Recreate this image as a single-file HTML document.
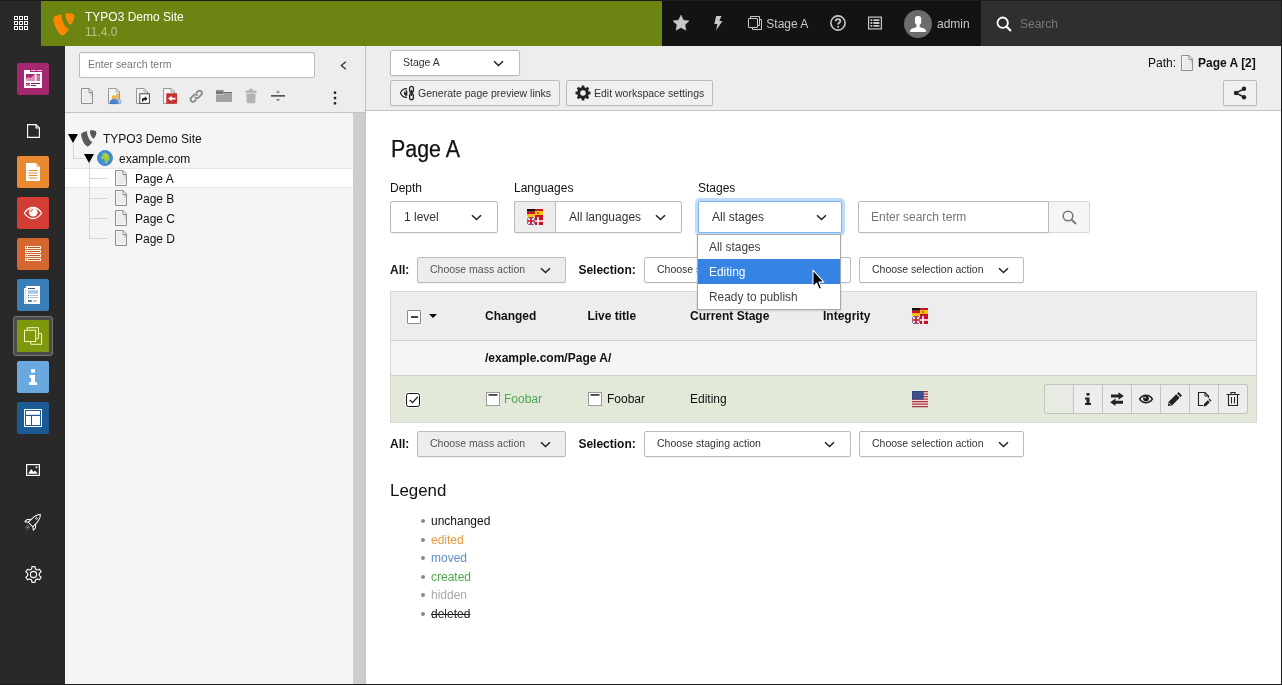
<!DOCTYPE html>
<html>
<head>
<meta charset="utf-8">
<title>TYPO3 Workspaces</title>
<style>
*{box-sizing:border-box;margin:0;padding:0}
html,body{width:1282px;height:685px;overflow:hidden;background:#fff}
body{font-family:"Liberation Sans",sans-serif;font-size:12px;color:#333;line-height:16px}
#app{will-change:transform;position:relative;width:1282px;height:685px;overflow:hidden;background:#fff}
.abs{position:absolute}
.t{position:absolute;white-space:nowrap;line-height:16px}
.b{font-weight:700}
svg{position:absolute;display:block;overflow:visible}
/* top bar */
#topbar{position:absolute;left:0;top:0;width:1282px;height:46px;background:#292929}
#tb-site{position:absolute;left:41px;top:1px;width:621px;height:45px;background:#6c8412}
#tb-tools{position:absolute;left:662px;top:0;width:319px;height:46px;background:#131313}
#tb-search{position:absolute;left:981px;top:0;width:301px;height:46px;background:#2f2f2f}
/* module menu */
#modmenu{position:absolute;left:0;top:46px;width:65px;height:639px;background:#292929}
.mod{position:absolute;left:17px;width:32px;height:32px;border-radius:2px}
/* tree */
#tree{position:absolute;left:65px;top:46px;width:300px;height:639px;background:#f5f5f5}
#tree-head{position:absolute;left:0;top:0;width:300px;height:67px;background:#ededed;border-bottom:1px solid #c3c3c3}
/* content */
#content{position:absolute;left:365px;top:46px;width:917px;height:639px;background:#fff;border-left:1px solid #c3c3c3}
#dochead{position:absolute;left:0;top:0;width:915px;height:65px;background:#ededed;border-bottom:1px solid #c3c3c3}
.sel{position:absolute;background:#fff;border:1px solid #bbb;border-radius:2px;box-shadow:0 1px 1px rgba(0,0,0,.06)}
.btn{position:absolute;background:#f0f0f0;border:1px solid #bbb;border-radius:2px;box-shadow:0 1px 1px rgba(0,0,0,.06)}
.sm{font-size:10.5px}
#legend i{position:absolute;left:54.700px;width:4px;height:4px;border-radius:2px;background:#8a8a8a}
.dd{font-size:11.9px}
</style>
</head>
<body>
<div id="app">

<!-- ================= TOP BAR ================= -->
<div id="topbar">
  <!-- grid icon -->
  <svg style="left:14px;top:16px" width="14" height="14" viewBox="0 0 14 14" fill="none" stroke="#fff" stroke-width="1" shape-rendering="crispEdges"><rect x="0.5" y="0.5" width="3" height="3"/><rect x="5.5" y="0.5" width="3" height="3"/><rect x="10.5" y="0.5" width="3" height="3"/><rect x="0.5" y="5.5" width="3" height="3"/><rect x="5.5" y="5.5" width="3" height="3"/><rect x="10.5" y="5.5" width="3" height="3"/><rect x="0.5" y="10.5" width="3" height="3"/><rect x="5.5" y="10.5" width="3" height="3"/><rect x="10.5" y="10.5" width="3" height="3"/></svg>
  <div id="tb-site">
    <!-- typo3 logo -->
    <svg style="left:8px;top:9px" width="29" height="29" viewBox="0 0 16 16" fill="#ff8700">
      <path d="M11.1 10.3c-.2 0-.3.1-.5.1-1.500 0-3.700-5.200-3.700-7 0-.6.200-.9.400-1-1.800.2-4 .9-4.700 1.700-.2.200-.2.600-.2 1 0 2.700 2.900 8.900 5 8.900.900 0 2.500-1.500 3.700-3.700M10.200 1.800c1.900 0 3.800.3 3.800 1.400 0 2.200-1.400 4.800-2.100 4.800-1.200 0-2.800-3.500-2.800-5.200 0-.8.300-1 1.100-1"/>
    </svg>
    <span class="t" style="left:44px;top:8px;color:#fff">TYPO3 Demo Site</span>
    <span class="t" style="left:44px;top:23px;color:rgba(255,255,255,.5)">11.4.0</span>
  </div>
  <div id="tb-tools">
    <!-- star -->
    <svg style="left:11px;top:15px" width="16" height="16" viewBox="0 0 16 16" fill="#c8c8c8">
      <path d="M8 .2l2.400 5 5.500.7-4 3.800 1 5.500L8 12.500l-4.900 2.700 1-5.500-4-3.800 5.500-.7z" stroke="#c8c8c8" stroke-width=".6" stroke-linejoin="round"/>
    </svg>
    <!-- bolt -->
    <svg style="left:48px;top:15px" width="16" height="16" viewBox="0 0 16 16" fill="#c8c8c8">
      <path d="M6.200 1h5.300L9.300 6h3.200L6 15.500 7.400 9H4.300z"/>
    </svg>
    <!-- workspace icon -->
    <svg style="left:85px;top:15px" width="16" height="16" viewBox="0 0 16 16" fill="none" stroke="#c8c8c8" stroke-width="1">
      <rect x="1.500" y="3.500" width="9" height="9" rx=".5"/><path d="M3.500 3.500V1.500h9v9h-2"/><path d="M12.500 4.500h2v10h-9v-2"/>
    </svg>
    <span class="t" style="left:104.300px;top:16px;color:#c8c8c8">Stage A</span>
    <!-- help -->
    <svg style="left:168px;top:15px" width="16" height="16" viewBox="0 0 16 16" fill="none" stroke="#c8c8c8">
      <circle cx="8" cy="8" r="7.100" stroke-width="1.600"/>
      <path d="M5.700 6.300c0-1.400 1-2.200 2.300-2.200s2.300.8 2.300 2.100c0 1.600-2.200 1.600-2.200 3.300" stroke-width="1.800"/><circle cx="8.100" cy="11.800" r="1.050" fill="#c8c8c8" stroke="none"/>
    </svg>
    <!-- list -->
    <svg style="left:206px;top:16px" width="14" height="14" viewBox="0 0 14 14" fill="none" stroke="#c8c8c8" stroke-width="1.200">
      <rect x=".6" y="1.100" width="12.800" height="11.800"/><path d="M2.500 4.200h1.800M5.400 4.200h6M2.500 7h1.800M5.400 7h6M2.500 9.800h1.800M5.400 9.800h6" stroke-width="1.800"/>
    </svg>
    <!-- avatar -->
    <div class="abs" style="left:242px;top:10px;width:28px;height:28px;border-radius:14px;background:#6c6c6c;overflow:hidden">
      <svg style="left:0;top:0" width="28" height="28" viewBox="0 0 28 28" fill="#fff">
        <rect x="11" y="6" width="6.200" height="8.500" rx="2.600"/><rect x="12.500" y="13" width="3.200" height="5"/><path d="M6 22c.2-2 .8-3 2.200-3.500L12.500 17l1.600 1.200 1.600-1.200 4.300 1.500c1.400.5 2 1.500 2.200 3.500z"/>
      </svg>
    </div>
    <span class="t" style="left:275px;top:16px;color:#c8c8c8">admin</span>
  </div>
  <div id="tb-search">
    <svg style="left:15px;top:16px" width="16" height="16" viewBox="0 0 16 16" fill="none" stroke="#fff" stroke-width="1.800">
      <circle cx="6.700" cy="6.700" r="5.200"/><path d="M10.600 10.600l4.400 4.400" stroke-width="2.200"/>
    </svg>
    <span class="t" style="left:39px;top:16px;color:#777">Search</span>
  </div>
</div>

<!-- ================= MODULE MENU ================= -->
<div id="modmenu">
  <!-- dashboard -->
  <div class="mod" style="top:17px;background:#a5276e">
    <svg style="left:0;top:0" width="32" height="32" viewBox="0 0 32 32">
      <path d="M7 7h6v2h12v16H7z" fill="#fff"/>
      <rect x="14" y="7" width="5" height="1" fill="#f3c6de"/><rect x="20" y="7" width="5" height="1" fill="#f3c6de"/>
      <rect x="9" y="11" width="9" height="7" fill="#a5276e"/><path d="M9 18v-2.500l2.500-1.500 2 1 4.500-4v7z" fill="#dc8fb9"/>
      <rect x="19.500" y="11" width="3.500" height="7" fill="#cf74a7"/><rect x="19.500" y="11" width="3.500" height="1" fill="#a5276e"/>
      <rect x="9" y="20" width="4" height="3" fill="#cf74a7"/><rect x="9" y="20" width="4" height="1" fill="#a5276e"/>
      <rect x="14" y="20" width="9" height="1" fill="#7d1d53"/><rect x="14" y="22" width="5" height="1" fill="#7d1d53"/>
    </svg>
  </div>
  <!-- web group icon -->
  <svg style="left:27px;top:78px" width="13" height="14" viewBox="0 0 13 14" fill="none" stroke="#fff" stroke-width="1.100">
    <path d="M.6 .6h8.400l3.400 3.400v9.400H.6z"/><path d="M9 .6V4h3.400"/>
  </svg>
  <!-- page -->
  <div class="mod" style="top:110px;background:#e98a30">
    <svg style="left:0;top:0" width="32" height="32" viewBox="0 0 32 32">
      <path d="M9 7h10l4 4v14H9z" fill="#fff"/><path d="M19 7l4 4h-4z" fill="#f6c99a"/>
      <path d="M11.500 14.500h9M11.500 17h9M11.500 19.500h9M11.500 22h9" stroke="#e98a30" stroke-width="1.100"/>
    </svg>
  </div>
  <!-- view -->
  <div class="mod" style="top:151px;background:#d23e35">
    <svg style="left:0;top:0" width="32" height="32" viewBox="0 0 32 32">
      <path d="M7.300 16C10 12 13 10.500 16 10.500S22 12 24.700 16C22 20 19 21.500 16 21.500S10 20 7.300 16z" fill="none" stroke="#fff" stroke-width="1.300"/>
      <circle cx="16.200" cy="15.300" r="4.300" fill="#fff"/><path d="M13.800 15a2.600 2.600 0 0 1 2.400-2.500" fill="none" stroke="#d23e35" stroke-width="1"/>
    </svg>
  </div>
  <!-- list -->
  <div class="mod" style="top:192px;background:#d4672f">
    <svg style="left:0;top:0" width="32" height="32" viewBox="0 0 32 32">
      <g fill="#fdf1df"><rect x="8" y="8" width="16" height="3"/><rect x="8" y="12" width="16" height="3"/><rect x="8" y="16" width="16" height="3"/><rect x="8" y="20" width="16" height="3"/></g>
      <path d="M11 9.500h12M11 13.500h12M11 17.500h12M11 21.500h12" stroke="#b3592b" stroke-width="1"/>
      <path d="M9 9.500h1M9 13.500h1M9 17.500h1M9 21.500h1" stroke="#b3592b" stroke-width="1"/>
    </svg>
  </div>
  <!-- forms -->
  <div class="mod" style="top:233px;background:#3a7fb8">
    <svg style="left:0;top:0" width="32" height="32" viewBox="0 0 32 32">
      <rect x="7" y="9" width="3" height="16" fill="#f2f6fb"/><rect x="9" y="7" width="14" height="18" fill="#fff"/><rect x="8.600" y="9" width=".6" height="16" fill="#bcd0e4"/>
      <rect x="11" y="9" width="7" height="1" fill="#46586b"/><rect x="11" y="11.200" width="10" height="3.500" fill="#a9c6e4"/>
      <rect x="11" y="16" width="1" height="1" fill="#46586b"/><rect x="13.200" y="16" width="7.800" height="1" fill="#b4c2d2"/>
      <rect x="11" y="18" width="1" height="1" fill="#46586b"/><rect x="13.200" y="18" width="7.800" height="1" fill="#b4c2d2"/>
      <rect x="11" y="21.200" width="3.800" height="1.700" fill="#2e6da4"/><rect x="16.200" y="21.200" width="3.700" height="1.700" fill="#b4c2d2"/>
    </svg>
  </div>
  <!-- workspaces (active) -->
  <div class="abs" style="left:13px;top:270px;width:40px;height:40px;border:1px solid #787878;background:#4c4c4c;border-radius:3px"></div>
  <div class="mod" style="top:274px;background:#7f990f;border-radius:1px">
    <svg style="left:0;top:0" width="32" height="32" viewBox="0 0 32 32" fill="none" stroke="#f3f8b4" stroke-width="1">
      <rect x="7.500" y="10.300" width="11.200" height="11.200"/><path d="M10.300 10.300V7.700h11.200v11h-2.600"/><path d="M21.600 13.500h3v10.800H13.700v-2.700"/>
    </svg>
  </div>
  <!-- info -->
  <div class="mod" style="top:315px;background:#6aa9e0">
    <svg style="left:0;top:0" width="32" height="32" viewBox="0 0 32 32" fill="#fff">
      <rect x="14" y="8.200" width="4" height="3.500"/><path d="M12.600 14H18v7.300h2V24h-8v-2.700h2V17h-1.400z"/>
    </svg>
  </div>
  <!-- template -->
  <div class="mod" style="top:356px;background:#1c5a96">
    <svg style="left:0;top:0" width="32" height="32" viewBox="0 0 32 32">
      <rect x="7.500" y="7.500" width="17" height="17" fill="none" stroke="#fff" stroke-width="1"/>
      <rect x="9" y="9" width="14" height="3.800" fill="#fff"/><rect x="9" y="14" width="5" height="9" fill="#fff"/><rect x="15" y="14" width="8" height="9" fill="#fff"/>
    </svg>
  </div>
  <!-- file group: image -->
  <svg style="left:26px;top:418px" width="14" height="12" viewBox="0 0 14 12">
    <rect x=".6" y=".6" width="12.800" height="10.800" fill="none" stroke="#fff" stroke-width="1.200"/><path d="M2.200 9.800l3-4.800 2.300 3 1.500-1.500 2.800 3.300z" fill="#fff"/><circle cx="10.500" cy="3.300" r="1" fill="#fff"/>
  </svg>
  <!-- rocket -->
  <svg style="left:25px;top:468px" width="16" height="16" viewBox="0 0 16 16" fill="none" stroke="#fff" stroke-width="1" stroke-linejoin="round">
    <g transform="rotate(45 8 8)"><path d="M8 -2.500C10.800 .5 11.200 4 11.200 7v4.500H4.800V7C4.800 4 5.200 .5 8 -2.500z"/><path d="M4.800 7.500L2 10.500v3l2.800-2M11.200 7.500l2.800 3v3l-2.800-2"/><circle cx="8" cy="3" r=".8" stroke-width=".8"/>
    <path d="M6.800 13.500v1M9.200 13.500v1M8 14.500v1.500M6.800 16.300v1M9.200 16.300v1" stroke-width=".9"/></g>
  </svg>
  <!-- gear -->
  <svg style="left:24.500px;top:519.500px" width="17" height="17" viewBox="0 0 17 17" fill="none" stroke="#fff" stroke-width="1.150" stroke-linejoin="round">
    <circle cx="8.500" cy="8.500" r="3.100"/>
    <path d="M6.580 2.920L6.970 .650L10.030 .650L10.420 2.920L12.370 4.050L14.540 3.250L16.060 5.900L14.290 7.370L14.290 9.630L16.060 11.100L14.540 13.750L12.370 12.950L10.420 14.080L10.030 16.350L6.970 16.350L6.580 14.080L4.630 12.950L2.460 13.750L.940 11.100L2.710 9.630L2.710 7.370L.940 5.900L2.460 3.250L4.630 4.050z"/>
  </svg>
</div>

<!-- ================= PAGE TREE ================= -->
<div id="tree">
  <div id="tree-head">
    <div class="abs" style="left:14px;top:6px;width:236px;height:26px;background:#fff;border:1px solid #bbb;border-radius:2px;box-shadow:inset 0 1px 1px rgba(0,0,0,.05)"></div>
    <span class="t sm" style="left:23px;top:10px;color:#777">Enter search term</span>
    <!-- collapse chevron -->
    <svg style="left:274.500px;top:14.500px" width="7.200" height="9" viewBox="0 0 8 10" fill="none" stroke="#333" stroke-width="1.500"><path d="M6.500 .8L1.500 5l5 4.200"/></svg>
    <!-- toolbar icons (tree-local coords: x-65, y-46) -->
    <svg style="left:14px;top:42px" width="16" height="16" viewBox="0 0 16 16"><path d="M2.500 .5h7.500l3.500 3.500v11.500h-11z" fill="#ececec"/><path d="M9.500 1.500h-6v13h9" fill="none" stroke="#f6f6f6" stroke-width="1"/><path d="M10.300 4.500H13v4.200z" fill="#cfcfcf"/><path d="M10 .5v4h3.500z" fill="#fff"/><path d="M10 .5v4h3.500" fill="none" stroke="#8e8e8e" stroke-width="1"/><path d="M2.500 .5h7.500l3.500 3.500v11.500h-11z" fill="none" stroke="#8e8e8e" stroke-width="1"/></svg>
    <!-- page with user -->
    <svg style="left:41px;top:42px" width="16" height="16" viewBox="0 0 16 16"><path d="M2.500 .5h7.500l3.500 3.500v11.500h-11z" fill="#f4f4f4" stroke="#999" stroke-width="1"/><path d="M10 .5v3.500h3.500z" fill="#fafafa" stroke="#999" stroke-width=".8"/>
      <rect x="10.300" y="6" width="3" height="4.500" rx="1.400" fill="#f3c04f" stroke="#c9962b" stroke-width=".5"/><path d="M8.500 15.500v-2.500c0-1.500 1.200-2.300 3.300-2.300s3.200.8 3.200 2.300v2.500z" fill="#a9c4e6" stroke="#7f9fc9" stroke-width=".5"/>
      <rect x="6.300" y="7.500" width="3.200" height="4.800" rx="1.500" fill="#f0b73c" stroke="#c9962b" stroke-width=".5"/><path d="M4 15.700v-1.700c0-1.600 1.300-2.500 3.900-2.500s3.900.9 3.900 2.500v1.700z" fill="#4a86cf" stroke="#356bb0" stroke-width=".5"/></svg>
    <!-- page shortcut -->
    <svg style="left:69px;top:42px" width="16" height="16" viewBox="0 0 16 16"><path d="M2.500 .5h7.500l3.500 3.500v11.500h-11z" fill="#f4f4f4" stroke="#999" stroke-width="1"/><path d="M10 .5v3.500h3.500z" fill="#fafafa" stroke="#999" stroke-width=".8"/>
      <rect x="5.800" y="5.800" width="9.600" height="9.600" fill="#fff" stroke="#444" stroke-width="1"/><path d="M8 13.500v-2c0-1 .6-1.600 1.600-1.600h1.200V8.300l2.700 2.500-2.700 2.500v-1.600H9.900c-.3 0-.4.100-.4.400v1.400z" fill="#111"/></svg>
    <!-- page link external -->
    <svg style="left:96px;top:42px" width="16" height="16" viewBox="0 0 16 16"><path d="M2.500 .5h7.500l3.500 3.500v11.500h-11z" fill="#f4f4f4" stroke="#999" stroke-width="1"/><path d="M10 .5v3.500h3.500z" fill="#fafafa" stroke="#999" stroke-width=".8"/>
      <rect x="5.300" y="5.300" width="10.700" height="10.400" fill="#c4302f"/><path d="M14.500 9.700v1.700h-3.800v1.800L7 10.500l3.700-2.700v1.900z" fill="#fff"/></svg>
    <!-- link -->
    <svg style="left:124px;top:43px" width="14.500" height="14.500" viewBox="0 0 16 16" fill="none" stroke="#8a8a8a" stroke-width="2" stroke-linecap="round">
      <path d="M7 9.200a2.600 2.600 0 0 0 3.700 0l2.800-2.800a2.600 2.600 0 0 0-3.700-3.700L8.500 4"/><path d="M9 6.800a2.600 2.600 0 0 0-3.700 0L2.500 9.600a2.600 2.600 0 0 0 3.700 3.700L7.500 12"/></svg>
    <!-- folder -->
    <svg style="left:151px;top:42px" width="16" height="16" viewBox="0 0 16 16"><path d="M0 2h7.500v4H0z" fill="#8a8a8a"/><path d="M0 4h7.500v1.500H0z" fill="#707070"/><path d="M0 6.500V14h16V4H8v2.500z" fill="#a2a2a2"/><path d="M7.500 4H16v1H7.500z" fill="#707070"/></svg>
    <!-- trash -->
    <svg style="left:178px;top:42px" width="16" height="16" viewBox="0 0 16 16" fill="#b4b4b4"><path d="M6.200 .8h3.600v1.700h3.700v2.300h-11V2.500h3.700z"/><path d="M3.300 5.500h9.400l-.6 9.700H3.900z"/></svg>
    <!-- divider -->
    <svg style="left:205px;top:42px" width="16" height="16" viewBox="0 0 16 16" fill="#8a8a8a"><rect x="1" y="7" width="14" height="1.700" fill="#555"/><path d="M8 2.200l2.200 2.500H5.800zM8 13.600l2.200-2.500H5.800z"/></svg>
    <!-- kebab -->
    <svg style="left:268px;top:45px" width="4" height="14" viewBox="0 0 4 14" fill="#222"><rect x=".8" y=".5" width="2.400" height="2.400"/><rect x=".8" y="5.800" width="2.400" height="2.400"/><rect x=".8" y="11.100" width="2.400" height="2.400"/></svg>
  </div>
  <!-- scrollbar gutter -->
  <div class="abs" style="left:288px;top:67px;width:12px;height:572px;background:#cdcdcd"></div>
  <!-- selected row -->
  <div class="abs" style="left:0;top:122px;width:288px;height:20px;background:#fff;border-top:1px solid #e6e6e6;border-bottom:1px solid #e6e6e6"></div>
  <!-- connector lines -->
  <svg style="left:0;top:0" width="301" height="300" fill="none" stroke="#d6d6d6" stroke-width="1">
    <path d="M8.500 97v15.500h11M24.500 117v75.500h18M24.500 132.500h18M24.500 152.500h18M24.500 172.500h18"/>
  </svg>
  <!-- arrows -->
  <svg style="left:3px;top:88px" width="10" height="9" viewBox="0 0 10 9" fill="#000"><path d="M0 0h10L5 9z"/></svg>
  <svg style="left:19px;top:108px" width="10" height="9" viewBox="0 0 10 9" fill="#000"><path d="M0 0h10L5 9z"/></svg>
  <!-- root typo3 icon -->
  <svg style="left:13px;top:82px" width="21" height="21" viewBox="0 0 16 16" fill="#5a5a5a"><path d="M11.100 10.300c-.2 0-.3.100-.5.100-1.500 0-3.700-5.200-3.700-7 0-.6.200-.9.400-1-1.800.2-4 .9-4.700 1.700-.2.200-.2.600-.2 1 0 2.700 2.900 8.900 5 8.900.9 0 2.500-1.500 3.700-3.700M10.200 1.800c1.900 0 3.800.3 3.800 1.400 0 2.200-1.400 4.800-2.100 4.800-1.200 0-2.800-3.500-2.800-5.200 0-.8.300-1 1.100-1"/></svg>
  <span class="t" style="left:38px;top:85px;color:#111">TYPO3 Demo Site</span>
  <!-- globe -->
  <svg style="left:32px;top:104px" width="16" height="16" viewBox="0 0 16 16"><circle cx="8" cy="8" r="7.700" fill="#3f8fdb"/><circle cx="8" cy="8" r="7.400" fill="none" stroke="#3578c4" stroke-width=".7"/>
    <path d="M6.300 3.200l1.700-.5 1.500.4.300 1.200 1.600.3.800 1.700-.6 1.500 1 .4-.5 1.800-1.600 1.300-.5 1.700-1.300.7-.9-1.700.1-1.700-1.100-1.300-1.800.2-.9-1.300.4-1.800 1.300-.9-.4-1.500z" fill="#a3cc39"/><path d="M8.700 4.300l1.100.1.600 1.300-.8.700-1.200-.5z" fill="#c6dc52"/></svg>
  <span class="t" style="left:54px;top:105px;color:#111">example.com</span>
  <svg style="left:48px;top:124px" width="16" height="16" viewBox="0 0 16 16"><path d="M2.500 .5h7.500l3.500 3.500v11.500h-11z" fill="#ececec"/><path d="M9.500 1.500h-6v13h9" fill="none" stroke="#f6f6f6" stroke-width="1"/><path d="M10.300 4.500H13v4.200z" fill="#cfcfcf"/><path d="M10 .5v4h3.500z" fill="#fff"/><path d="M10 .5v4h3.500" fill="none" stroke="#8e8e8e" stroke-width="1"/><path d="M2.500 .5h7.500l3.500 3.500v11.500h-11z" fill="none" stroke="#8e8e8e" stroke-width="1"/></svg>
  <span class="t" style="left:70px;top:125px;color:#111">Page A</span>
  <svg style="left:48px;top:144px" width="16" height="16" viewBox="0 0 16 16"><path d="M2.500 .5h7.500l3.500 3.500v11.500h-11z" fill="#ececec"/><path d="M9.500 1.500h-6v13h9" fill="none" stroke="#f6f6f6" stroke-width="1"/><path d="M10.300 4.500H13v4.200z" fill="#cfcfcf"/><path d="M10 .5v4h3.500z" fill="#fff"/><path d="M10 .5v4h3.500" fill="none" stroke="#8e8e8e" stroke-width="1"/><path d="M2.500 .5h7.500l3.500 3.500v11.500h-11z" fill="none" stroke="#8e8e8e" stroke-width="1"/></svg>
  <span class="t" style="left:70px;top:145px;color:#111">Page B</span>
  <svg style="left:48px;top:164px" width="16" height="16" viewBox="0 0 16 16"><path d="M2.500 .5h7.500l3.500 3.500v11.500h-11z" fill="#ececec"/><path d="M9.500 1.500h-6v13h9" fill="none" stroke="#f6f6f6" stroke-width="1"/><path d="M10.300 4.500H13v4.200z" fill="#cfcfcf"/><path d="M10 .5v4h3.500z" fill="#fff"/><path d="M10 .5v4h3.500" fill="none" stroke="#8e8e8e" stroke-width="1"/><path d="M2.500 .5h7.500l3.500 3.500v11.500h-11z" fill="none" stroke="#8e8e8e" stroke-width="1"/></svg>
  <span class="t" style="left:70px;top:165px;color:#111">Page C</span>
  <svg style="left:48px;top:184px" width="16" height="16" viewBox="0 0 16 16"><path d="M2.500 .5h7.500l3.500 3.500v11.500h-11z" fill="#ececec"/><path d="M9.500 1.500h-6v13h9" fill="none" stroke="#f6f6f6" stroke-width="1"/><path d="M10.300 4.500H13v4.200z" fill="#cfcfcf"/><path d="M10 .5v4h3.500z" fill="#fff"/><path d="M10 .5v4h3.500" fill="none" stroke="#8e8e8e" stroke-width="1"/><path d="M2.500 .5h7.500l3.500 3.500v11.500h-11z" fill="none" stroke="#8e8e8e" stroke-width="1"/></svg>
  <span class="t" style="left:70px;top:185px;color:#111">Page D</span>
</div>

<!-- ================= CONTENT ================= -->
<div id="content">
  <div id="dochead">
    <!-- Stage A select -->
    <div class="sel" style="left:24px;top:4px;width:130px;height:26px"></div>
    <span class="t sm" style="left:37px;top:8px">Stage A</span>
    <svg style="left:127px;top:14px" width="11" height="7" viewBox="0 0 11 7"><path d="M1 1.200l4.500 4.300L10 1.200" fill="none" stroke="#222" stroke-width="1.500"/></svg>
    <!-- buttons -->
    <div class="btn" style="left:24px;top:34px;width:170px;height:26px"></div>
    <svg style="left:33px;top:39px" width="16" height="16" viewBox="0 0 16 16" fill="none" stroke="#222">
      <path d="M8 3.600C5 3.300 2.600 5.200 1.400 8c1.200 2.800 3.600 4.700 6.600 4.400" stroke-width="1.200"/><path d="M8.300 5.400a2.700 2.700 0 1 0 0 5.200z" fill="#222" stroke="none"/><circle cx="6.300" cy="6.700" r=".7" fill="#eee" stroke="none"/>
      <rect x="10.600" y="1.300" width="3.800" height="6" rx="1.900" stroke-width="1.300"/><rect x="10.600" y="8.700" width="3.800" height="6" rx="1.900" stroke-width="1.300"/><path d="M12.500 5v6" stroke-width="1.500"/>
    </svg>
    <span class="t sm" style="left:52px;top:39px">Generate page preview links</span>
    <div class="btn" style="left:200px;top:34px;width:147px;height:26px"></div>
    <svg style="left:209px;top:39px" width="16" height="16" viewBox="0 0 16 16" fill="#222">
      <path fill-rule="evenodd" d="M6.800 .5h2.400l.4 1.900 1.300.5 1.600-1.100 1.700 1.700-1.100 1.600.5 1.300 1.900.4v2.400l-1.900.4-.5 1.300 1.100 1.600-1.700 1.700-1.600-1.100-1.300.5-.4 1.900H6.800l-.4-1.900-1.300-.5-1.600 1.100-1.700-1.700 1.100-1.600-.5-1.300L.5 9.200V6.800l1.900-.4.500-1.300-1.100-1.600 1.700-1.700 1.600 1.100 1.300-.5zM8 5.200a2.800 2.800 0 1 0 0 5.600 2.800 2.800 0 0 0 0-5.600z"/>
    </svg>
    <span class="t sm" style="left:228px;top:39px">Edit workspace settings</span>
    <!-- path -->
    <span class="t" style="left:782px;top:9px;color:#111">Path:</span>
    <svg style="left:813px;top:9px" width="16" height="16" viewBox="0 0 16 16"><path d="M2.500 .5h7.500l3.500 3.500v11.500h-11z" fill="#ececec"/><path d="M9.500 1.500h-6v13h9" fill="none" stroke="#f6f6f6" stroke-width="1"/><path d="M10.300 4.500H13v4.200z" fill="#cfcfcf"/><path d="M10 .5v4h3.500z" fill="#fff"/><path d="M10 .5v4h3.500" fill="none" stroke="#8e8e8e" stroke-width="1"/><path d="M2.500 .5h7.500l3.500 3.500v11.500h-11z" fill="none" stroke="#8e8e8e" stroke-width="1"/></svg>
    <span class="t b" style="left:832px;top:9px;color:#111">Page A [2]</span>
    <!-- share -->
    <div class="btn" style="left:857px;top:34px;width:34px;height:26px"></div>
    <svg style="left:867px;top:40px" width="14" height="14" viewBox="0 0 14 14" fill="#222" stroke="#222"><circle cx="11" cy="2.800" r="2.200" stroke="none"/><circle cx="11" cy="11.200" r="2.200" stroke="none"/><circle cx="3" cy="7" r="2.200" stroke="none"/><path d="M3 7l8-4.200M3 7l8 4.200" stroke-width="1.500" fill="none"/></svg>
  </div>

  <!-- heading -->
  <span class="t" id="h1" style="left:25px;top:87.500px;font-size:23px;line-height:30px;color:#111;-webkit-text-stroke:.25px #111;transform-origin:0 0;transform:scaleX(.93)">Page A</span>

  <!-- filter labels -->
  <span class="t" style="left:24px;top:134px;color:#111">Depth</span>
  <span class="t" style="left:148px;top:134px;color:#111">Languages</span>
  <span class="t" style="left:332px;top:134px;color:#111">Stages</span>
  <!-- depth -->
  <div class="sel" style="left:24px;top:155px;width:108px;height:32px"></div>
  <span class="t" style="left:38px;top:163px">1 level</span>
  <svg style="left:105px;top:168px" width="11" height="7" viewBox="0 0 11 7"><path d="M1 1.200l4.500 4.300L10 1.200" fill="none" stroke="#222" stroke-width="1.500"/></svg>
  <!-- languages -->
  <div class="sel" style="left:148px;top:155px;width:168px;height:32px"></div>
  <div class="abs" style="left:148px;top:155px;width:42px;height:32px;background:#ededed;border:1px solid #bbb;border-radius:2px 0 0 2px"></div>
  <svg style="left:161px;top:163px" width="16" height="16" viewBox="0 0 16 16"><g><rect x="0" y="0" width="8" height="2.700" fill="#111"/><rect x="0" y="2.700" width="8" height="2.700" fill="#d3131b"/><rect x="0" y="5.400" width="8" height="2.600" fill="#f6c400"/>
<rect x="8" y="0" width="8" height="2" fill="#c8102e"/><rect x="8" y="2" width="8" height="4" fill="#f6c400"/><rect x="8" y="6" width="8" height="2" fill="#c8102e"/><rect x="10" y="3" width="2" height="2" fill="#b5651d"/>
<rect x="0" y="8" width="8" height="8" fill="#0c0c5c"/><path d="M0 8l8 8M8 8l-8 8" stroke="#fff" stroke-width="1.300"/><path d="M4 8v8M0 12h8" stroke="#fff" stroke-width="2.800"/><path d="M4 8v8M0 12h8" stroke="#c8102e" stroke-width="1.700"/>
<rect x="8" y="8" width="8" height="8" fill="#c8102e"/><path d="M11 8v8M8 12h8" stroke="#fff" stroke-width="1.600"/></g></svg>
  <span class="t" style="left:203px;top:163px">All languages</span>
  <svg style="left:289px;top:168px" width="11" height="7" viewBox="0 0 11 7"><path d="M1 1.200l4.500 4.300L10 1.200" fill="none" stroke="#222" stroke-width="1.500"/></svg>
  <!-- stages (focused) -->
  <div class="sel" style="left:332px;top:155px;width:144px;height:32px;border-color:#7fb5ee;box-shadow:0 0 0 3px rgba(60,140,235,.32)"></div>
  <span class="t" style="left:346px;top:163px">All stages</span>
  <svg style="left:450px;top:168px" width="11" height="7" viewBox="0 0 11 7"><path d="M1 1.200l4.500 4.300L10 1.200" fill="none" stroke="#222" stroke-width="1.500"/></svg>
  <!-- search -->
  <div class="abs" style="left:682px;top:155px;width:42px;height:32px;background:#f5f5f5;border:1px solid #d7d7d7;border-radius:0 2px 2px 0"></div>
  <div class="sel" style="left:492px;top:155px;width:191px;height:32px;border-radius:2px 0 0 2px"></div>
  <span class="t" style="left:505px;top:163px;color:#767676">Enter search term</span>
  <svg style="left:696px;top:164px" width="15" height="15" viewBox="0 0 15 15" fill="none" stroke="#777" stroke-width="1.500"><circle cx="6" cy="6" r="4.800"/><path d="M9.600 9.600l4.400 4.400" stroke-width="2"/></svg>

  <!-- ====== mass actions top ====== -->
  <span class="t b" style="left:24px;top:216px;color:#111">All:</span>
  <div class="sel" style="left:51px;top:211px;width:149px;height:26px;background:#ededed"></div>
  <span class="t sm" style="left:64px;top:215px;color:#555">Choose mass action</span>
  <svg style="left:174px;top:221px" width="11" height="7" viewBox="0 0 11 7"><path d="M1 1.200l4.500 4.300L10 1.200" fill="none" stroke="#222" stroke-width="1.500"/></svg>
  <span class="t b" style="left:212.400px;top:216px;color:#111">Selection:</span>
  <div class="sel" style="left:278px;top:211px;width:207px;height:26px"></div>
  <span class="t sm" style="left:291px;top:215px">Choose staging action</span>
  <svg style="left:458px;top:221px" width="11" height="7" viewBox="0 0 11 7"><path d="M1 1.200l4.500 4.300L10 1.200" fill="none" stroke="#222" stroke-width="1.500"/></svg>
  <div class="sel" style="left:493px;top:211px;width:165px;height:26px"></div>
  <span class="t sm" style="left:506px;top:215px">Choose selection action</span>
  <svg style="left:632px;top:221px" width="11" height="7" viewBox="0 0 11 7"><path d="M1 1.200l4.500 4.300L10 1.200" fill="none" stroke="#222" stroke-width="1.500"/></svg>

  <!-- ====== table ====== -->
  <div class="abs" style="left:24px;top:245px;width:867px;height:132px;border:1px solid #d7d7d7;background:#f5f5f5"></div>
  <div class="abs" style="left:25px;top:246px;width:865px;height:49px;background:#ededed;border-bottom:1px solid #cfcfcf"></div>
  <div class="abs" style="left:25px;top:329px;width:865px;height:47px;background:#e2e9d9;border-top:1px solid #cfcfcf"></div>
  <!-- header checkbox (indeterminate) -->
  <div class="abs" style="left:41px;top:264px;width:14px;height:13.500px;background:#fff;border:1px solid #8c8c8c;border-radius:1px"></div>
  <div class="abs" style="left:44.500px;top:270px;width:7px;height:1.500px;background:#444"></div>
  <svg style="left:63px;top:268px" width="8" height="4" viewBox="0 0 8 4" fill="#000"><path d="M0 0h8L4 4z"/></svg>
  <span class="t b" style="left:119px;top:262px;color:#111">Changed</span>
  <span class="t b" style="left:221.400px;top:262px;color:#111">Live title</span>
  <span class="t b" style="left:324px;top:262px;color:#111">Current Stage</span>
  <span class="t b" style="left:457px;top:262px;color:#111">Integrity</span>
  <svg style="left:546px;top:262px" width="16" height="16" viewBox="0 0 16 16"><g><rect x="0" y="0" width="8" height="2.700" fill="#111"/><rect x="0" y="2.700" width="8" height="2.700" fill="#d3131b"/><rect x="0" y="5.400" width="8" height="2.600" fill="#f6c400"/>
<rect x="8" y="0" width="8" height="2" fill="#c8102e"/><rect x="8" y="2" width="8" height="4" fill="#f6c400"/><rect x="8" y="6" width="8" height="2" fill="#c8102e"/><rect x="10" y="3" width="2" height="2" fill="#b5651d"/>
<rect x="0" y="8" width="8" height="8" fill="#0c0c5c"/><path d="M0 8l8 8M8 8l-8 8" stroke="#fff" stroke-width="1.300"/><path d="M4 8v8M0 12h8" stroke="#fff" stroke-width="2.800"/><path d="M4 8v8M0 12h8" stroke="#c8102e" stroke-width="1.700"/>
<rect x="8" y="8" width="8" height="8" fill="#c8102e"/><path d="M11 8v8M8 12h8" stroke="#fff" stroke-width="1.600"/></g></svg>
  <!-- path row -->
  <span class="t b" style="left:119px;top:304px;color:#111">/example.com/Page A/</span>
  <!-- data row -->
  <div class="abs" style="left:40px;top:347px;width:14px;height:14px;background:#fff;border:1.500px solid #111;border-radius:2.500px;box-shadow:0 0 0 1px rgba(255,255,255,.7)"></div>
  <svg style="left:42.500px;top:350px" width="9.500" height="8" viewBox="0 0 9.500 8" fill="none" stroke="#222" stroke-width="1.300"><path d="M.8 4l2.700 2.600L8.800 .8"/></svg>
  <svg style="left:119px;top:345px" width="16" height="16" viewBox="0 0 16 16"><rect x="1.500" y="1.500" width="13" height="13" fill="#fff" stroke="#999" stroke-width="1"/><rect x="3.500" y="3" width="9" height="1.800" fill="#444"/></svg>
  <span class="t" style="left:138px;top:345px;color:#4fa74f">Foobar</span>
  <svg style="left:221px;top:345px" width="16" height="16" viewBox="0 0 16 16"><rect x="1.500" y="1.500" width="13" height="13" fill="#fff" stroke="#999" stroke-width="1"/><rect x="3.500" y="3" width="9" height="1.800" fill="#444"/></svg>
  <span class="t" style="left:241px;top:345px;color:#111">Foobar</span>
  <span class="t" style="left:324px;top:345px;color:#111">Editing</span>
  <svg style="left:546px;top:345px" width="16" height="16" viewBox="0 0 16 16"><rect width="16" height="16" fill="#fcdada"/>
<path d="M0 .6h16M0 3.100h16M0 5.600h16M0 8.100h16M0 10.600h16M0 13.100h16M0 15.500h16" stroke="#a2393c" stroke-width="1.250"/><rect width="11.500" height="8.500" fill="#2c417d"/><rect x="1" y="1" width="9.500" height="6.500" fill="#3c508c"/></svg>
  <div class="abs" style="left:678px;top:338px;width:30px;height:30px;background:#e8ebe3;border:1px solid #c4c4c4;border-radius:2px 0 0 2px;"></div>
  <div class="abs" style="left:707px;top:338px;width:30px;height:30px;background:#ededed;border:1px solid #c4c4c4;"></div>
  <svg style="left:714px;top:345px" width="16" height="16" viewBox="0 0 16 16" fill="#222"><rect x="6.500" y="2" width="3" height="2.600"/><path d="M5 6.500h4.500v5.500H11v2H5v-2h1.500V8.500H5z"/></svg>
  <div class="abs" style="left:736px;top:338px;width:30px;height:30px;background:#ededed;border:1px solid #c4c4c4;"></div>
  <svg style="left:743px;top:345px" width="16" height="16" viewBox="0 0 16 16" fill="#222"><path d="M2 3.500h7.500V1.200L14.800 5 9.500 8.800V6.500H2zM14 9.700H6.500V7.400L1.200 11.200 6.500 15v-2.300H14z"/></svg>
  <div class="abs" style="left:765px;top:338px;width:30px;height:30px;background:#ededed;border:1px solid #c4c4c4;"></div>
  <svg style="left:772px;top:345px" width="16" height="16" viewBox="0 0 16 16"><path d="M1.600 8C3.200 5.500 5.300 4.300 8 4.300S12.800 5.500 14.400 8C12.800 10.500 10.700 11.700 8 11.700S3.200 10.500 1.600 8z" fill="none" stroke="#222" stroke-width="1.400"/><circle cx="8" cy="7.500" r="2.900" fill="#222"/><circle cx="7" cy="6.500" r=".8" fill="#eee"/></svg>
  <div class="abs" style="left:794px;top:338px;width:30px;height:30px;background:#ededed;border:1px solid #c4c4c4;"></div>
  <svg style="left:801px;top:345px" width="16" height="16" viewBox="0 0 16 16" fill="#222"><path d="M11.500 1l3.500 3.500-1.500 1.500L10 2.500zM9.200 3.300l3.500 3.500L5 14.500 1 15l.5-4z"/><path d="M1.800 11.800l2.400 2.400" stroke="#eee" stroke-width=".8"/></svg>
  <div class="abs" style="left:823px;top:338px;width:30px;height:30px;background:#ededed;border:1px solid #c4c4c4;"></div>
  <svg style="left:830px;top:345px" width="16" height="16" viewBox="0 0 16 16"><path d="M7 14.500H2.500v-13H9l3.500 3.500v2" fill="none" stroke="#222" stroke-width="1.100"/><path d="M9 1.500V5h3.500" fill="none" stroke="#222" stroke-width="1"/><path d="M13.500 7.500l2 2-1 1-2-2zM11.800 9.200l2 2-3.800 3.800-2.500.5.500-2.500z" fill="#222"/></svg>
  <div class="abs" style="left:852px;top:338px;width:30px;height:30px;background:#ededed;border:1px solid #c4c4c4;border-radius:0 2px 2px 0;"></div>
  <svg style="left:859px;top:345px" width="16" height="16" viewBox="0 0 16 16" fill="none" stroke="#222" stroke-width="1.100"><path d="M6 3V1.500h4V3M1.500 3.500h13" stroke-width="1.100"/><path d="M3.500 3.500h9v11h-9z" stroke-width="1.100"/><path d="M6.500 6v6.500M9.500 6v6.500" stroke-width="1"/></svg>
  

  <!-- ====== mass actions bottom ====== -->
  <span class="t b" style="left:24px;top:390px;color:#111">All:</span>
  <div class="sel" style="left:51px;top:385px;width:149px;height:26px;background:#ededed"></div>
  <span class="t sm" style="left:64px;top:389px;color:#555">Choose mass action</span>
  <svg style="left:174px;top:395px" width="11" height="7" viewBox="0 0 11 7"><path d="M1 1.200l4.500 4.300L10 1.200" fill="none" stroke="#222" stroke-width="1.500"/></svg>
  <span class="t b" style="left:212.400px;top:390px;color:#111">Selection:</span>
  <div class="sel" style="left:278px;top:385px;width:207px;height:26px"></div>
  <span class="t sm" style="left:291px;top:389px">Choose staging action</span>
  <svg style="left:458px;top:395px" width="11" height="7" viewBox="0 0 11 7"><path d="M1 1.200l4.500 4.300L10 1.200" fill="none" stroke="#222" stroke-width="1.500"/></svg>
  <div class="sel" style="left:493px;top:385px;width:165px;height:26px"></div>
  <span class="t sm" style="left:506px;top:389px">Choose selection action</span>
  <svg style="left:632px;top:395px" width="11" height="7" viewBox="0 0 11 7"><path d="M1 1.200l4.500 4.300L10 1.200" fill="none" stroke="#222" stroke-width="1.500"/></svg>

  <!-- ====== legend ====== -->
  <span class="t" style="left:24px;top:432.800px;font-size:16.900px;line-height:24px;color:#111">Legend</span>
  <div id="legend">
    <i style="top:473px"></i><span class="t" style="left:65px;top:467px;color:#111">unchanged</span>
    <i style="top:492px"></i><span class="t" style="left:65px;top:486px;color:#e9993c">edited</span>
    <i style="top:510px"></i><span class="t" style="left:65px;top:504px;color:#5b8fc2">moved</span>
    <i style="top:529px"></i><span class="t" style="left:65px;top:523px;color:#4fa74f">created</span>
    <i style="top:547px"></i><span class="t" style="left:65px;top:541px;color:#aaa">hidden</span>
    <i style="top:566px"></i><span class="t" style="left:65px;top:560px;color:#222;text-decoration:line-through">deleted</span>
  </div>

  <!-- ====== stages dropdown (open) ====== -->
  <div class="abs" style="left:331px;top:188px;width:144px;height:76px;background:#fff;border:1px solid #a9a9a9;box-shadow:0 1px 2px rgba(0,0,0,.15)"></div>
  <div class="abs" style="left:332px;top:213px;width:142px;height:25px;background:#3584e4"></div>
  <span class="t dd" style="left:343px;top:193px;color:#444">All stages</span>
  <span class="t dd" style="left:343px;top:218px;color:#fff">Editing</span>
  <span class="t dd" style="left:343px;top:243px;color:#444">Ready to publish</span>
  <!-- cursor -->
  <svg style="left:445.500px;top:222.500px" width="13" height="21.500" viewBox="0 0 13 20" preserveAspectRatio="none"><path d="M1 1v15.500l3.600-3.400 2.500 5.700 2.300-1-2.500-5.600h5z" fill="#000" stroke="#fff" stroke-width="1" stroke-linejoin="round"/></svg>
</div>

<!-- frame borders -->
<div class="abs" style="left:0;top:0;width:1282px;height:1px;background:#1c1c1c"></div>
<div class="abs" style="left:1281px;top:0;width:1px;height:685px;background:#1c1c1c"></div>
<div class="abs" style="left:0;top:684px;width:1282px;height:1px;background:#1c1c1c"></div>
</div>
</body>
</html>
